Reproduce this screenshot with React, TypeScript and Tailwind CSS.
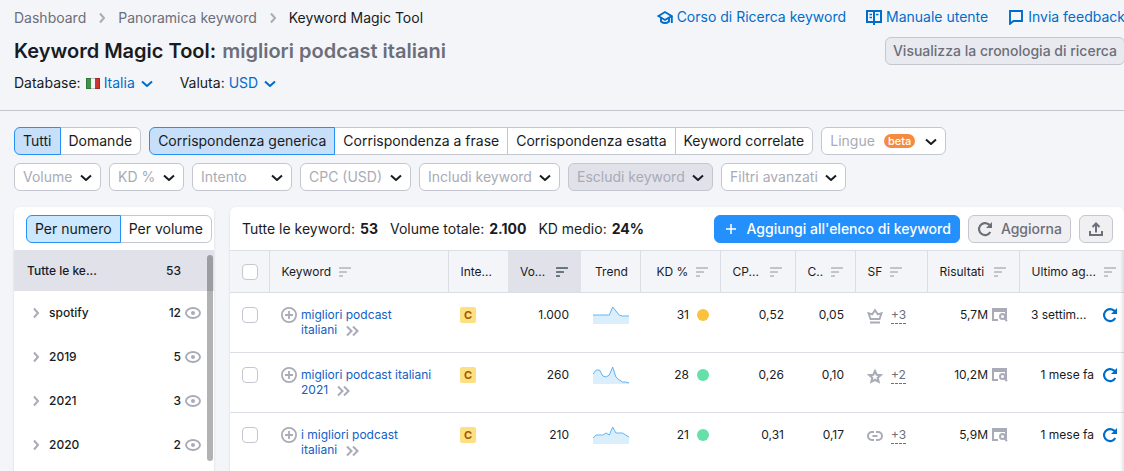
import { useState } from "react";
import type { ReactNode } from "react";
import clsx from "clsx";

type Group = { name: string; count: number };

type KeywordRow = {
  keyword: string;
  volume: string;
  trend: number[];
  kd: number;
  kdColor: string;
  cpc: string;
  competition: string;
  feature: "crown" | "star" | "link";
  moreFeatures: string;
  results: string;
  updated: string;
};

const MATCH_TYPES = [
  "Corrispondenza generica",
  "Corrispondenza a frase",
  "Corrispondenza esatta",
  "Keyword correlate",
];

const GROUPS: Group[] = [
  { name: "spotify", count: 12 },
  { name: "2019", count: 5 },
  { name: "2021", count: 3 },
  { name: "2020", count: 2 },
];

const KEYWORDS: KeywordRow[] = [
  {
    keyword: "migliori podcast italiani",
    volume: "1.000",
    trend: [9, 9, 9, 9, 9, 9, 17, 13, 9, 8, 8, 8],
    kd: 31,
    kdColor: "bg-[#fbc240]",
    cpc: "0,52",
    competition: "0,05",
    feature: "crown",
    moreFeatures: "+3",
    results: "5,7M",
    updated: "3 settim...",
  },
  {
    keyword: "migliori podcast italiani 2021",
    volume: "260",
    trend: [10, 14, 14, 8, 7, 9, 17, 7, 4, 2, 2, 1],
    kd: 28,
    kdColor: "bg-[#66dfa8]",
    cpc: "0,26",
    competition: "0,10",
    feature: "star",
    moreFeatures: "+2",
    results: "10,2M",
    updated: "1 mese fa",
  },
  {
    keyword: "i migliori podcast italiani",
    volume: "210",
    trend: [6, 9, 9, 9, 11, 9, 17, 11, 11, 11, 9, 7],
    kd: 21,
    kdColor: "bg-[#66dfa8]",
    cpc: "0,31",
    competition: "0,17",
    feature: "link",
    moreFeatures: "+3",
    results: "5,9M",
    updated: "1 mese fa",
  },
];

function Icon({
  children,
  size = 16,
  className,
}: {
  children: ReactNode;
  size?: number;
  className?: string;
}) {
  return (
    <svg
      width={size}
      height={size}
      viewBox="0 0 16 16"
      fill="none"
      stroke="currentColor"
      strokeWidth="2"
      className={clsx("shrink-0", className)}
      aria-hidden="true"
    >
      {children}
    </svg>
  );
}

function ChevronRight({ className }: { className?: string }) {
  return (
    <Icon className={className}>
      <path d="M6 3.5 10 8l-4 4.5" />
    </Icon>
  );
}

function ChevronDown({ className }: { className?: string }) {
  return (
    <Icon className={className}>
      <path d="m3 6.5 5 4.5 5-4.5" strokeLinejoin="round" />
    </Icon>
  );
}

function RefreshIcon({ className }: { className?: string }) {
  return (
    <Icon className={className}>
      <path d="M13.3 11A6 6 0 1 1 11.800 3.400L13 4.500" strokeWidth="2.100" />
      <path d="M15 1v6H9Z" fill="currentColor" stroke="none" />
    </Icon>
  );
}

function SortIcon({ active }: { active?: boolean }) {
  return (
    <svg
      width="12"
      height="10"
      fill="currentColor"
      className={clsx("shrink-0", active ? "text-[#66777f]" : "text-[#bfc5c9]")}
      aria-hidden="true"
    >
      <rect width="12" height="2" rx="0.5" />
      <rect y="4" width="8" height="2" rx="0.5" />
      <rect y="8" width="4" height="2" rx="0.5" />
    </svg>
  );
}

function FeatureIcon({ name }: { name: KeywordRow["feature"] }) {
  if (name === "crown") {
    return (
      <Icon>
        <path d="M3.500 11 1.500 5.200 5.200 6.400 8 2.300l2.800 4.100 3.700-1.200L12.500 11Z" strokeWidth="1.900" />
        <path d="M3 14.500h10" strokeWidth="2" />
      </Icon>
    );
  }
  if (name === "star") {
    return (
      <Icon>
        <path
          d="m8 3 1.700 3.700 4 .4-3 2.700.9 4L8 11.800l-3.600 2 .9-4-3-2.700 4-.4Z"
          strokeWidth="2.100"
        />
      </Icon>
    );
  }
  return (
    <Icon>
      <path d="M7 4H5a4 4 0 0 0 0 8h2M9 4h2a4 4 0 0 1 0 8H9M5.500 8h5" strokeWidth="2" />
    </Icon>
  );
}

function Sparkline({ values }: { values: number[] }) {
  const points = values.map(
    (value, i) => `${(i * 36) / (values.length - 1)},${18 - value}`
  );
  return (
    <svg width="36" height="18" className="block" aria-hidden="true">
      <polygon points={`0,18 ${points.join(" ")} 36,18`} fill="#dbeefc" />
      <polyline points={points.join(" ")} fill="none" stroke="#5fb4f5" />
    </svg>
  );
}

function Segmented({
  items,
  label,
  activeColor = "bg-[#c7dff9]",
}: {
  items: string[];
  label: string;
  activeColor?: string;
}) {
  const [selected, setSelected] = useState(items[0]);

  return (
    <div role="group" aria-label={label} className="flex text-sm">
      {items.map((item) => (
        <button
          key={item}
          type="button"
          aria-pressed={item === selected}
          onClick={() => setSelected(item)}
          className={clsx(
            "-ml-px h-7 border px-2 whitespace-nowrap first:ml-0 first:rounded-l-md last:rounded-r-md",
            item === selected
              ? `relative border-[#2591f5] ${activeColor}`
              : "border-[#c4c7cf] bg-white"
          )}
        >
          {item}
        </button>
      ))}
    </div>
  );
}

function Filter({
  label,
  badge,
  disabled,
  width = "",
}: {
  label: string;
  badge?: string;
  disabled?: boolean;
  width?: string;
}) {
  return (
    <div className={clsx("grid items-center text-sm", width)}>
      <select
        aria-label={label}
        disabled={disabled}
        className={clsx(
          "[grid-area:1/1] h-7 w-full appearance-none rounded-md border border-[#c4c7cf] pl-2 text-[#a9abb6] opacity-100",
          badge ? "pr-[70px]" : "pr-[27px]",
          disabled ? "bg-[#e0e1e9]" : "bg-white"
        )}
      >
        <option>{label}</option>
      </select>
      <span className="pointer-events-none [grid-area:1/1] flex items-center gap-2 justify-self-end pr-[7px]">
        {badge && (
          <span className="rounded-full bg-[#f58b43] px-1 text-[11px] leading-[14px] font-medium text-white">
            {badge}
          </span>
        )}
        <ChevronDown className="text-[#191b23]" />
      </span>
    </div>
  );
}

function InlineSelect({ id, value }: { id: string; value: string }) {
  return (
    <span className="grid items-center">
      <select
        id={id}
        className="[grid-area:1/1] appearance-none bg-transparent pr-[19px] text-[#006dca]"
      >
        <option>{value}</option>
      </select>
      <ChevronDown className="pointer-events-none [grid-area:1/1] justify-self-end text-[#006dca]" />
    </span>
  );
}

function Header() {
  return (
    <header className="flex justify-between border-b border-[#c4c7cf] pb-[17px] pl-3.5 text-sm whitespace-nowrap">
      <div className="pt-2">
        <nav aria-label="Breadcrumb" className="flex items-center gap-2 text-[#6c6e79]">
          <a href="#dashboard">Dashboard</a>
          <ChevronRight className="text-[#a9abb6]" />
          <a href="#panoramica">Panoramica keyword</a>
          <ChevronRight className="text-[#a9abb6]" />
          <span className="text-[#191b23]">Keyword Magic Tool</span>
        </nav>
        <h1 className="mt-[11px] text-xl leading-6 font-semibold">
          Keyword Magic Tool:{" "}
          <span className="ml-px text-[#6c6e79]">migliori podcast italiani</span>
        </h1>
        <div className="mt-2.5 flex h-5 items-center">
          <label htmlFor="database">Database:</label>
          <svg width="14" height="11" className="mr-1 ml-[5px]" aria-hidden="true">
            <rect width="14" height="11" fill="#f5f5f5" />
            <rect width="5" height="11" fill="#3d9448" />
            <rect x="9" width="5" height="11" fill="#cd3530" />
            <rect x=".5" y=".5" width="13" height="10" fill="none" stroke="#000" strokeOpacity=".2" />
          </svg>
          <InlineSelect id="database" value="Italia" />
          <label htmlFor="valuta" className="mr-1 ml-[25px]">
            Valuta:
          </label>
          <InlineSelect id="valuta" value="USD" />
        </div>
      </div>
      <div className="-mr-px flex flex-col items-end pt-[7px]">
        <nav aria-label="Risorse" className="flex gap-5 text-[#006dca]">
          <a href="#corso" className="flex items-center gap-1">
            <Icon>
              <path d="M1.500 7 8 3l6.500 4L8 11Z" strokeWidth="1.900" />
              <path d="M4 9v3.500c2.500 2 5.500 2 8 0V9M14.800 7v7" strokeWidth="1.900" />
            </Icon>
            Corso di Ricerca keyword
          </a>
          <a href="#manuale" className="flex items-center gap-1">
            <Icon>
              <path d="M1 2h14v11H1ZM8 2v14" strokeWidth="2" />
              <path d="M3.500 5.500H6M3.500 8.500H6M10 5.500h2.500" strokeWidth="1.500" />
            </Icon>
            Manuale utente
          </a>
          <a href="#feedback" className="flex items-center gap-1">
            <Icon>
              <path d="M2 2h12v10H5.500L2 14.800Z" strokeWidth="1.900" />
            </Icon>
            Invia feedback
          </a>
        </nav>
        <button
          type="button"
          className="mt-2.5 h-7 rounded-md border border-[#c4c7cf] bg-[#e9eaef] px-[7px] font-medium text-[#6c6e79]"
        >
          Visualizza la cronologia di ricerca
        </button>
      </div>
    </header>
  );
}

function Filters() {
  return (
    <section aria-label="Filtri" className="flex flex-col gap-2 pt-4 pl-3.5">
      <div className="flex gap-2">
        <Segmented label="Tipo di keyword" items={["Tutti", "Domande"]} />
        <Segmented label="Corrispondenza" items={MATCH_TYPES} />
        <Filter label="Lingue" badge="beta" />
      </div>
      <div className="flex gap-2">
        <Filter label="Volume" />
        <Filter label="KD %" />
        <Filter label="Intento" width="w-[100px]" />
        <Filter label="CPC (USD)" />
        <Filter label="Includi keyword" />
        <Filter label="Escludi keyword" disabled />
        <Filter label="Filtri avanzati" />
      </div>
    </section>
  );
}

function Sidebar() {
  return (
    <aside className="flex w-[200px] shrink-0 flex-col rounded-t-md bg-white shadow-sm">
      <div className="pt-2 pb-[7px] pl-3">
        <Segmented
          label="Raggruppa"
          items={["Per numero", "Per volume"]}
          activeColor="bg-[#cce8ff]"
        />
      </div>
      <div className="relative text-xs font-medium">
        <button
          type="button"
          className="flex h-[41px] w-full items-center justify-between bg-[#e0e1e9] pr-[33px] pl-[13px]"
        >
          <span>Tutte le ke...</span>
          <span>53</span>
        </button>
        <ul>
          {GROUPS.map((group) => (
            <li key={group.name} className="flex h-11 items-center pr-[13px] pl-3.5">
              <button type="button" className="flex flex-1 items-center gap-[5px]">
                <ChevronRight className="text-[#a9abb6]" />
                {group.name}
              </button>
              <span className="mr-1">{group.count}</span>
              <button type="button" aria-label={`Escludi ${group.name}`} className="text-[#a9abb6]">
                <Icon>
                  <ellipse cx="8" cy="8" rx="7" ry="5" strokeWidth="1.900" />
                  <circle cx="8" cy="8" r="2" fill="currentColor" stroke="none" />
                </Icon>
              </button>
            </li>
          ))}
        </ul>
        <div className="absolute top-[5px] right-px bottom-1.5 w-1.5 rounded-full bg-black/30" />
      </div>
    </aside>
  );
}

function Total({ label, value }: { label: string; value: string }) {
  return (
    <p className="flex gap-[5px]">
      {label} <b className="font-bold">{value}</b>
    </p>
  );
}

function Toolbar() {
  return (
    <div className="flex h-[43px] items-center justify-between px-3 text-sm whitespace-nowrap">
      <div className="flex gap-3">
        <Total label="Tutte le keyword:" value="53" />
        <Total label="Volume totale:" value="2.100" />
        <Total label="KD medio:" value="24%" />
      </div>
      <div className="-mr-px flex gap-2">
        <button
          type="button"
          className="flex h-7 items-center gap-2 rounded-md border border-[#2490fb] bg-[#2490fb] px-2 font-medium text-white"
        >
          <Icon>
            <path d="M8 3v10M3 8h10" strokeWidth="1.500" />
          </Icon>
          Aggiungi all'elenco di keyword
        </button>
        <button
          type="button"
          className="flex h-7 items-center gap-2 rounded-md border border-[#c4c7cf] bg-[#f0f0f3] px-2 font-medium text-[#6c6e79]"
        >
          <RefreshIcon />
          Aggiorna
        </button>
        <button
          type="button"
          aria-label="Esporta"
          className="flex h-7 items-center rounded-md border border-[#c4c7cf] bg-[#f0f0f3] px-2 text-[#6c6e79]"
        >
          <Icon>
            <path d="M2 10v4h12v-4M8 11.500V3M4.500 6 8 2.500 11.500 6" />
          </Icon>
        </button>
      </div>
    </div>
  );
}

function HeadCell({
  label,
  active,
  sortable = true,
  className,
}: {
  label: string;
  active?: boolean;
  sortable?: boolean;
  className?: string;
}) {
  return (
    <th
      scope="col"
      aria-sort={active ? "descending" : undefined}
      className={clsx(
        "border-[#dcdde5] pr-[13px] pl-3 font-normal",
        active && "bg-[#e0e1e9]",
        className
      )}
    >
      <span className="flex items-center justify-between gap-2 whitespace-nowrap">
        {label}
        {sortable && <SortIcon active={active} />}
      </span>
    </th>
  );
}

function Checkbox({ label }: { label: string }) {
  return (
    <input
      type="checkbox"
      aria-label={label}
      className="block size-4 appearance-none rounded border border-[#c4c7cf] bg-white checked:bg-[#2490fb]"
    />
  );
}

function KeywordLink({ keyword }: { keyword: string }) {
  const words = keyword.split(" ");
  const last = words.pop();

  // the arrows stay on the same line as the last word
  return (
    <a href="#keyword" className="leading-[15px] text-[#1360c4]">
      {words.join(" ")}{" "}
      <span className="whitespace-nowrap">
        {last}
        <svg
          width="13"
          height="10"
          fill="none"
          stroke="#a9abb6"
          strokeWidth="2"
          className="ml-[9px] inline align-[-2px]"
          aria-hidden="true"
        >
          <path d="m1 .5 4.500 4.500L1 9.500M7 .5 11.500 5 7 9.500" />
        </svg>
      </span>
    </a>
  );
}

function KeywordTable() {
  return (
    <table className="w-full table-fixed border-collapse text-xs">
      <colgroup>
        <col className="w-[39px]" />
        <col className="w-[179px]" />
        <col className="w-[60px]" />
        <col className="w-[73px]" />
        <col className="w-[59px]" />
        <col className="w-[80px]" />
        <col className="w-[75px]" />
        <col className="w-[60px]" />
        <col className="w-[72px]" />
        <col className="w-[92px]" />
        <col />
      </colgroup>
      <thead>
        <tr className="h-[42px] border-y border-[#dcdde5] bg-[#f4f5f9] text-left">
          <th scope="col" className="border-r border-[#dcdde5] pl-3">
            <Checkbox label="Seleziona tutte" />
          </th>
          <th scope="col" className="border-r border-[#dcdde5] px-3 font-normal">
            <span className="flex items-center gap-2">
              Keyword
              <SortIcon />
            </span>
          </th>
          <HeadCell label="Inte..." sortable={false} />
          <HeadCell label="Vo..." active />
          <HeadCell label="Trend" sortable={false} className="border-r pl-3.5" />
          <HeadCell label="KD %" className="border-r pl-4" />
          <HeadCell label="CP..." className="border-r" />
          <HeadCell label="C.." className="border-r" />
          <th scope="col" className="border-r border-[#dcdde5] px-3 font-normal">
            <span className="flex items-center gap-2">
              SF
              <SortIcon />
            </span>
          </th>
          <HeadCell label="Risultati" className="border-r" />
          <th scope="col" className="pr-2 pl-3 font-normal whitespace-nowrap">
            <span className="flex items-center justify-between">
              Ultimo ag...
              <SortIcon />
            </span>
          </th>
        </tr>
      </thead>
      <tbody>
        {KEYWORDS.map((row) => (
          <tr key={row.keyword} className="h-[60px] border-b border-[#dcdde5] align-top">
            <td className="pt-3.5 pl-3">
              <Checkbox label={row.keyword} />
            </td>
            <td className="px-3 pt-3.5">
              <div className="flex gap-1">
                <button type="button" aria-label="Aggiungi" className="size-4 shrink-0 text-[#a9abb6]">
                  <Icon>
                    <circle cx="8" cy="8" r="7.100" strokeWidth="1.800" />
                    <path d="M8 4v8M4 8h8" strokeWidth="1.800" />
                  </Icon>
                </button>
                <KeywordLink keyword={row.keyword} />
              </div>
            </td>
            <td className="pt-3.5 pl-3">
              <span className="flex size-4 items-center justify-center rounded-xs bg-[#fce081] text-[11px] font-bold text-[#a75800]">
                C
              </span>
            </td>
            <td className="pt-3.5 pr-3 text-right">{row.volume}</td>
            <td className="pt-[13px] pl-3">
              <Sparkline values={row.trend} />
            </td>
            <td className="pt-3.5 pr-[11px]">
              <span className="flex items-center justify-end gap-2">
                {row.kd}
                <span className={clsx("size-3 rounded-full", row.kdColor)} />
              </span>
            </td>
            <td className="pt-3.5 pr-[11px] text-right">{row.cpc}</td>
            <td className="pt-3.5 pr-[11px] text-right">{row.competition}</td>
            <td className="pt-3.5 pl-3">
              <span className="flex items-center gap-2 text-[#a9abb6]">
                <FeatureIcon name={row.feature} />
                <span className="border-b border-dashed border-[#6c6e79] text-[#6c6e79]">
                  {row.moreFeatures}
                </span>
              </span>
            </td>
            <td className="pt-3.5 pr-[11px]">
              <span className="flex items-center justify-end gap-1">
                {row.results}
                <Icon className="text-[#a9abb6]">
                  <path d="M0 1h15v4H0Z" fill="currentColor" stroke="none" />
                  <path d="M1 2v11h5M14 3v9" />
                  <circle cx="10.500" cy="9.500" r="2.500" />
                  <path d="m12 11 3 3" />
                </Icon>
              </span>
            </td>
            <td className="pt-3.5 pr-1.5 pl-3">
              <span className="flex items-center gap-2 whitespace-nowrap">
                <span
                  className={clsx("flex-1", !row.updated.endsWith("...") && "text-right")}
                >
                  {row.updated}
                </span>
                <button type="button" aria-label="Aggiorna keyword" className="text-[#006dca]">
                  <RefreshIcon />
                </button>
              </span>
            </td>
          </tr>
        ))}
      </tbody>
    </table>
  );
}

function App() {
  return (
    <div className="flex h-screen flex-col overflow-hidden bg-[#f4f5f9] font-[Inter,sans-serif] text-[#191b23]">
      <Header />
      <Filters />
      <main className="mt-4 flex flex-1 gap-4 pl-3.5">
        <Sidebar />
        <section
          aria-label="Keyword"
          className="relative min-w-0 flex-1 rounded-t-md bg-white shadow-sm"
        >
          <Toolbar />
          <KeywordTable />
          <div className="pointer-events-none absolute top-11 right-0 bottom-0 w-1 bg-gradient-to-l from-black/10 to-transparent" />
        </section>
      </main>
    </div>
  );
}

export default App;
